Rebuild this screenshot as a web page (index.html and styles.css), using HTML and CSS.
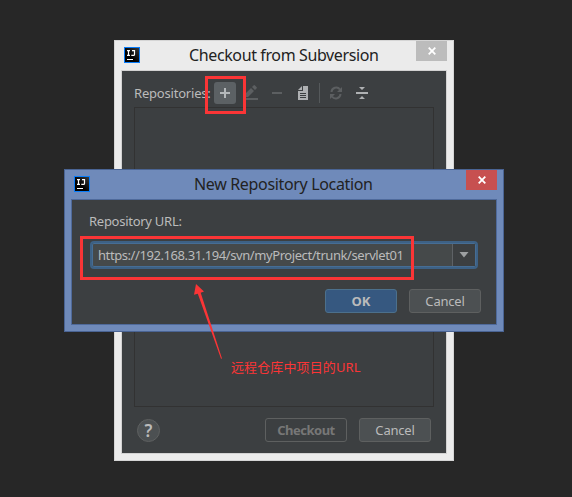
FILE: index.html
```html
<!DOCTYPE html>
<html lang="zh-CN">
<head>
<meta charset="utf-8">
<title>Checkout from Subversion</title>
<link rel="stylesheet" href="styles.css">
</head>
<body>
<main class="desktop">
  <section class="window checkout">
    <header class="titlebar">
      <svg class="logo" width="16" height="16" viewBox="0 0 16 16"><defs><linearGradient id="shade" x1="0" y1="1" x2="1" y2="0"><stop offset=".4" stop-color="#000"/><stop offset="1" stop-color="#3a3a3a"/></linearGradient></defs><rect width="16" height="16" fill="#087cfa"/><rect x="1" y="1" width="14" height="14" fill="url(#shade)"/><path d="M3 3.600h3M4.500 3.600v5M3 8.400h3M8 3.600h2.500v3.800q0 1-1 1H7.300M3 12.500h6" fill="none" stroke="#fff" stroke-width="1.200"/></svg>
      <h1 class="title"><span class="t-checkout">Checkout from Subversion</span></h1>
      <button class="close" aria-label="Close"><svg width="8" height="8" viewBox="0 0 8 8"><path d="M.7.7l6.600 6.600M7.300.7L.7 7.300" stroke="#fff" stroke-width="1.800"/></svg></button>
    </header>
    <div class="content">
      <div class="toolbar">
        <span class="label t-repos">Repositories:</span>
        <button class="tool add" aria-label="Add"><svg width="22" height="22" viewBox="0 0 22 22"><path d="M6 11h10M11 6v10" stroke="#b4b8ba" stroke-width="2"/></svg></button>
        <svg class="tools" width="140" height="22" viewBox="0 0 140 22">
          <g fill="#5c5f61"><path d="M8 16h14v2H8zM9 15v-3l6-6 3 3-6 6zM16 5l1.500-1.500q.8-.8 1.500 0l1.500 1.500q.7.7 0 1.500L19 8z"/><path d="M36 10h10v2H36z"/></g>
          <path fill="#afb1b3" fill-rule="evenodd" d="M67 4h5v14H62V9h5zM64 11v1h6v-1zm0 2v1h6v-1zm0 2v1h6v-1zM66 4v4h-4z"/>
          <path d="M83.500 1v20" stroke="#55595b"/>
          <g fill="none" stroke="#5c5f61" stroke-width="2"><path d="M95.500 10a4.700 4.700 0 0 1 8.500-2.500M104.500 12a4.700 4.700 0 0 1-8.500 2.500"/></g><path fill="#5c5f61" d="M106 5v5h-5zM94 17v-5h5z"/>
          <path fill="#afb1b3" d="M120 10h12v2h-12zM123 5h6l-3 3zM123 17h6l-3-3z"/>
        </svg>
      </div>
      <div class="list"></div>
      <footer class="actions">
        <button class="help" aria-label="Help"><span>?</span></button>
        <button class="btn disabled"><span class="t-co">Checkout</span></button>
        <button class="btn"><span class="t-cancel">Cancel</span></button>
      </footer>
    </div>
  </section>

  <section class="window location">
    <header class="titlebar">
      <svg class="logo" width="16" height="16" viewBox="0 0 16 16"><rect width="16" height="16" fill="#087cfa"/><rect x="1" y="1" width="14" height="14" fill="url(#shade)"/><path d="M3 3.600h3M4.500 3.600v5M3 8.400h3M8 3.600h2.500v3.800q0 1-1 1H7.300M3 12.500h6" fill="none" stroke="#fff" stroke-width="1.200"/></svg>
      <h2 class="title"><span class="t-new">New Repository Location</span></h2>
      <button class="close" aria-label="Close"><svg width="8" height="8" viewBox="0 0 8 8"><path d="M.7.7l6.600 6.600M7.300.7L.7 7.300" stroke="#fff" stroke-width="1.800"/></svg></button>
    </header>
    <div class="content">
      <div class="label t-url">Repository URL:</div>
      <div class="combo">
        <div class="value"><span class="t-value">https://192.168.31.194/svn/myProject/trunk/servlet01</span></div>
        <div class="arrow"><svg width="10" height="6" viewBox="0 0 10 6"><path d="M.5 0h9L5 5.500z" fill="#9da0a2"/></svg></div>
      </div>
      <footer class="actions">
        <button class="btn primary"><span class="t-ok">OK</span></button>
        <button class="btn"><span class="t-cancel">Cancel</span></button>
      </footer>
    </div>
  </section>

  <div class="mark mark-add"></div>
  <div class="mark mark-url"></div>
  <svg class="pointer" width="40" height="84" viewBox="190 280 40 84"><path d="M196 284l8 7.500-3.300 1.300L222 358.500l-1 .3-23.200-65-3.800 1z" fill="#fb3536"/></svg>
  <div class="note"><span class="t-note">远程仓库中项目的URL</span></div>
</main>
</body>
</html>
```

FILE: styles.css
```css
* { box-sizing: border-box; }
body { margin: 0; background: #272727; font-family: "Noto Sans", "Noto Sans CJK SC", sans-serif; font-size: 13px; color: #bbb; }
button { font: inherit; color: inherit; padding: 0; border: 0; display: flex; align-items: center; justify-content: center; }
.desktop { position: relative; width: 572px; height: 497px; overflow: hidden; }
.window { position: absolute; padding: 0 7px 7px; display: flex; flex-direction: column; }
.checkout { left: 114px; top: 40px; width: 340px; height: 421px; background: #ebebeb; border: 1px solid #d5d5d5; }
.location { left: 64px; top: 169px; width: 440px; height: 163px; background: #6f8aba; border: 1px solid #4a6494; }
.titlebar { height: 29px; margin-right: -1px; display: flex; flex: none; align-items: flex-start; }
.logo { margin: 6px 0 0 2px; flex: none; }
.title { flex: 1; margin: 0; font-size: 16px; font-weight: 400; line-height: 28px; color: #222; white-space: nowrap; }
.checkout .title { padding-left: 49px; }
.location .title { padding-left: 104px; }
.close { width: 31px; height: 20px; background: #bcbcbc; }
.location .close { background: #c75050; }
.content { flex: 1; background: #3c3f41; outline: 1px solid #d2d2d2; margin-top: 1px; }
.location .content { outline-color: #4f6a9b; }
span { display: inline-block; white-space: nowrap; }
.t-checkout { letter-spacing: -.38px; }
.t-new { letter-spacing: -.34px; }
.t-value { letter-spacing: -.42px; }
.t-url { letter-spacing: -.27px; }
.t-co { letter-spacing: -.5px; }
.t-cancel { letter-spacing: -.2px; }
.t-note { letter-spacing: .12px; }
.checkout .content { padding: 11px 12px 0; }
.toolbar { height: 22px; display: flex; align-items: center; }
.t-repos { width: 80px; line-height: 22px; letter-spacing: -.2px; }
.tool { width: 22px; height: 22px; background: #5c6164; border-radius: 3px; }
.list { height: 300px; margin-top: 3px; border: 1px solid #323232; }
.actions { display: flex; gap: 12px; }
.checkout .actions { padding: 11px 3px 0; }
.help { width: 23px; height: 23px; margin: 1px auto 0 0; border-radius: 50%; border: 1px solid #5e6060; background: #4c5052; font-size: 17px; font-weight: 600; line-height: 20px; }
.btn { width: 72px; height: 24px; border: 1px solid #5e6060; border-radius: 3px; background: #4c5052; line-height: 22px; }
.disabled { width: 82px; background: transparent; color: #777; font-weight: 700; }
.primary { background: #365880; border-color: #4c708c; font-weight: 700; }
.location .content { padding: 12px 15px 0 17px; }
.location .label { line-height: 20px; position: relative; top: -1px; }
.combo { width: 388px; height: 28px; margin: 9px 0 0 1px; border: 2px solid #3d6185; border-radius: 4px; background: #45494a; display: flex; box-shadow: inset 0 0 0 1px #466d94; }
.value { flex: 1; padding-left: 6px; line-height: 24px; }
.arrow { width: 23px; margin: 1px 0 1px 1px; border-left: 1px solid #5e6266; background: #3c3f41; display: flex; align-items: center; justify-content: center; margin-right: 1px; }
.location .actions { justify-content: flex-end; margin-top: 20px; }
.mark { position: absolute; border: 3px solid #fb3536; }
.mark-add { left: 205px; top: 76px; width: 41px; height: 38px; }
.mark-url { left: 80px; top: 236px; width: 334px; height: 44px; }
.pointer { position: absolute; left: 190px; top: 280px; }
.note { position: absolute; left: 231px; top: 357px; line-height: 20px; color: #fb3536; }
```
